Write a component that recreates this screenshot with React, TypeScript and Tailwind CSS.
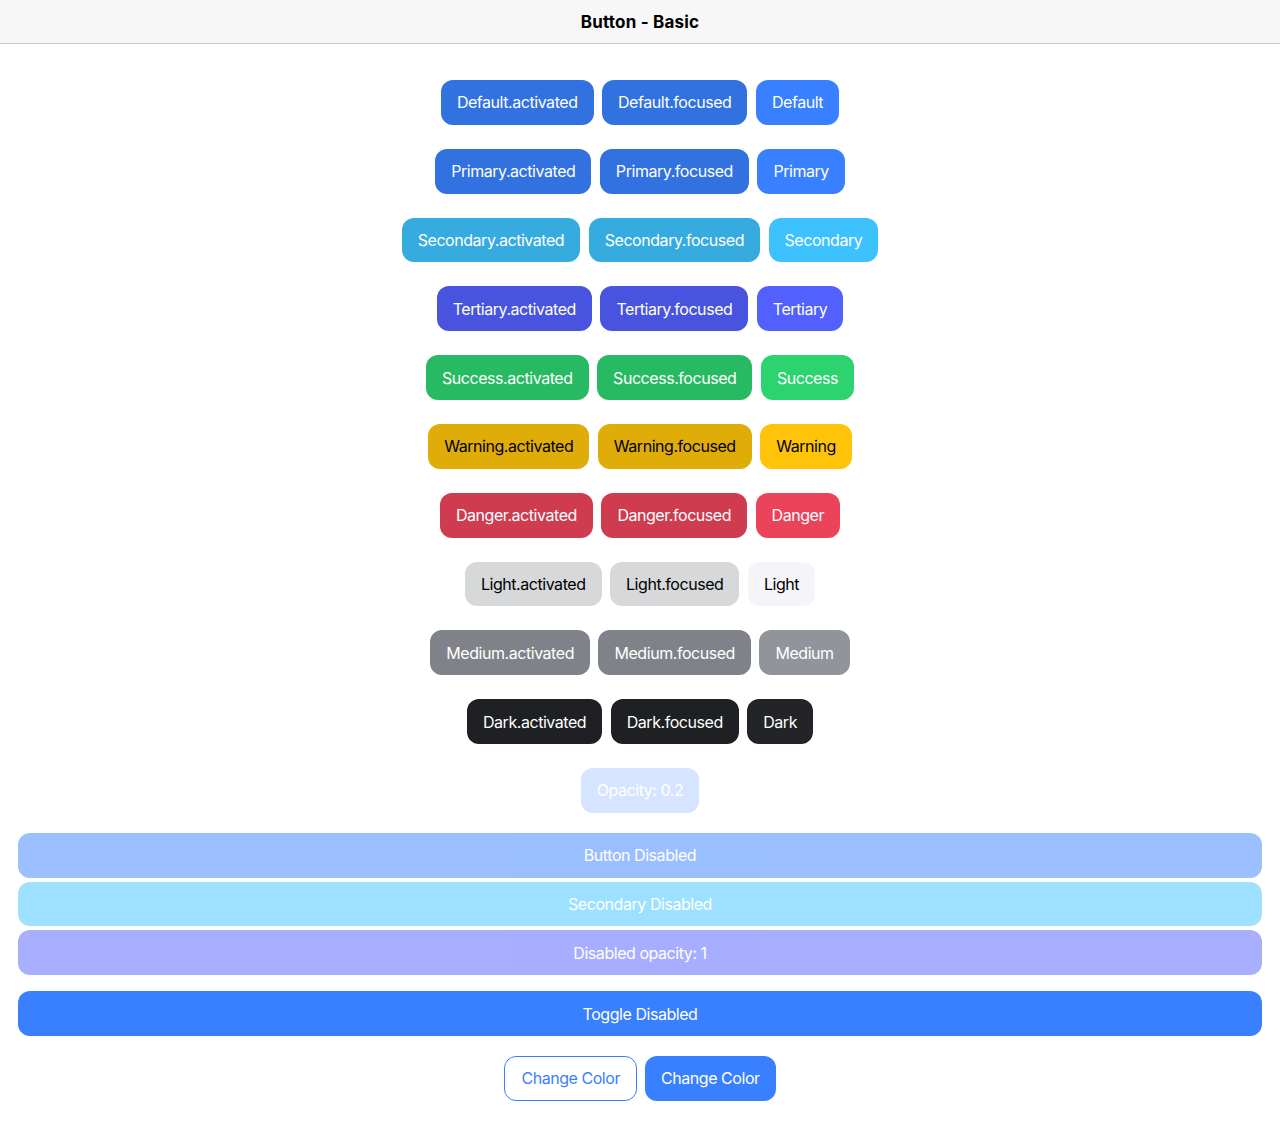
import React from 'react';

type Variant = {
  name: string;
  shade: string;
  base: string;
  text: string;
};

// shade = activated / focused background, base = normal background
const variants: Variant[] = [
  { name: 'Default', shade: 'bg-[#3171e0]', base: 'bg-[#3880ff]', text: 'text-white' },
  { name: 'Primary', shade: 'bg-[#3171e0]', base: 'bg-[#3880ff]', text: 'text-white' },
  { name: 'Secondary', shade: 'bg-[#36abe0]', base: 'bg-[#3dc2ff]', text: 'text-white' },
  { name: 'Tertiary', shade: 'bg-[#4854e0]', base: 'bg-[#5260ff]', text: 'text-white' },
  { name: 'Success', shade: 'bg-[#28ba62]', base: 'bg-[#2dd36f]', text: 'text-white' },
  { name: 'Warning', shade: 'bg-[#e0ac08]', base: 'bg-[#ffc409]', text: 'text-black' },
  { name: 'Danger', shade: 'bg-[#cf3c4f]', base: 'bg-[#eb445a]', text: 'text-white' },
  { name: 'Light', shade: 'bg-[#d7d8da]', base: 'bg-[#f4f5f8]', text: 'text-black' },
  { name: 'Medium', shade: 'bg-[#808289]', base: 'bg-[#92949c]', text: 'text-white' },
  { name: 'Dark', shade: 'bg-[#1e2023]', base: 'bg-[#222428]', text: 'text-white' },
];

function Btn({ className, children }: { className: string; children: React.ReactNode }) {
  return (
    <button className={`h-[44.8px] px-4 rounded-[12px] text-[16px] leading-none tracking-[-0.45px] whitespace-nowrap ${className}`}>
      {children}
    </button>
  );
}

function BlockBtn({ className, children }: { className: string; children: React.ReactNode }) {
  return (
    <button className={`w-full h-[44.8px] rounded-[12px] text-[16px] leading-none tracking-[-0.45px] ${className}`}>
      {children}
    </button>
  );
}

export default function App() {
  return (
    <div className="min-h-screen bg-white font-['Inter',sans-serif] text-black">
      <header className="h-[44px] bg-[#f7f7f7] border-b border-[#c8c8c8] flex items-center justify-center">
        <h1 className="text-[17px] font-bold tracking-[0.2px] mt-[2px]">Button - Basic</h1>
      </header>

      <main className="px-[18px] pt-[36px]">
        <div className="flex flex-col gap-[24px]">
          {variants.map((v) => (
            <div key={v.name} className="flex justify-center gap-[8.5px]">
              <Btn className={`${v.shade} ${v.text}`}>{v.name}.activated</Btn>
              <Btn className={`${v.shade} ${v.text}`}>{v.name}.focused</Btn>
              <Btn className={`${v.base} ${v.text}`}>{v.name}</Btn>
            </div>
          ))}
          <div className="flex justify-center">
            <Btn className="bg-[#3880ff] text-white opacity-20">Opacity: 0.2</Btn>
          </div>
        </div>

        <div className="mt-[20px] flex flex-col gap-[4px]">
          <BlockBtn className="bg-[#3880ff] text-white opacity-50">Button Disabled</BlockBtn>
          <BlockBtn className="bg-[#3dc2ff] text-white opacity-50">Secondary Disabled</BlockBtn>
          <BlockBtn className="bg-[#5260ff] text-white opacity-50">Disabled opacity: 1</BlockBtn>
        </div>

        <div className="mt-[16px]">
          <BlockBtn className="bg-[#3880ff] text-white">Toggle Disabled</BlockBtn>
        </div>

        <div className="mt-[20px] flex justify-center gap-[8px]">
          <Btn className="bg-white border border-[#3880ff] text-[#3880ff]">Change Color</Btn>
          <Btn className="bg-[#3880ff] text-white">Change Color</Btn>
        </div>
      </main>
    </div>
  );
}
